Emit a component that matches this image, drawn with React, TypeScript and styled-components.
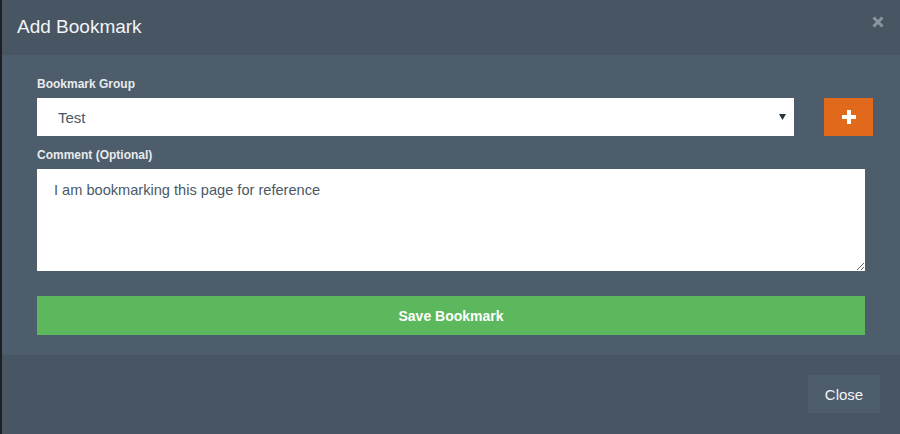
import { createGlobalStyle } from "styled-components";
import styled from "styled-components";

const GlobalStyle = createGlobalStyle`
  html, body {
    margin: 0;
    padding: 0;
    background: #1c1f23;
  }
  body {
    font-family: "Liberation Sans", Arial, sans-serif;
  }
`;

const Page = styled.div`
  height: 434px;
  padding-left: 2px;
  box-sizing: border-box;
  background: #1c1f23;
`;

const Modal = styled.div`
  display: flex;
  flex-direction: column;
  height: 100%;
  background: #485563;
`;

const Header = styled.div`
  display: flex;
  align-items: flex-start;
  justify-content: space-between;
  height: 55px;
  box-sizing: border-box;
  padding: 14px 16px 0 15px;
`;

const Title = styled.h4`
  margin: 0;
  font-size: 19px;
  font-weight: normal;
  line-height: 26px;
  color: #f2f4f5;
`;

const CloseX = styled.button`
  border: none;
  background: none;
  padding: 0;
  margin-top: 2px;
  width: 12px;
  height: 12px;
  cursor: pointer;
  display: flex;
`;

const Body = styled.div`
  background: #4d5d6c;
  padding: 20px 35px 20px 35px;
  display: flex;
  flex-direction: column;
`;

const Label = styled.label`
  display: block;
  font-size: 12px;
  font-weight: bold;
  color: #e8ebee;
  line-height: 18px;
  margin-bottom: 5px;
`;

const GroupRow = styled.div`
  display: flex;
  gap: 30px;
  margin-right: -8px;
  margin-bottom: 10px;
`;

const SelectWrap = styled.div`
  position: relative;
  flex: 1;
`;

const Select = styled.select`
  appearance: none;
  width: 100%;
  height: 38px;
  border: none;
  border-radius: 0;
  background: #fff;
  padding: 0 0 0 21px;
  font-family: "Liberation Sans", Arial, sans-serif;
  font-size: 15px;
  color: #4a5968;
  outline: none;
`;

const Caret = styled.svg`
  position: absolute;
  right: 8px;
  top: 16px;
  pointer-events: none;
`;

const AddButton = styled.button`
  width: 49px;
  height: 38px;
  border: none;
  background: #e0691c;
  display: flex;
  align-items: center;
  justify-content: center;
  padding: 0;
  cursor: pointer;
`;

const Comment = styled.textarea`
  display: block;
  box-sizing: border-box;
  width: 100%;
  height: 102px;
  border: none;
  border-radius: 0;
  padding: 11px 17px 8px;
  font-family: "Liberation Sans", Arial, sans-serif;
  font-size: 14.6px;
  line-height: 20px;
  color: #4a5968;
  margin: 0 0 25px;
  outline: none;
`;

const SaveButton = styled.button`
  height: 39px;
  width: 100%;
  border: none;
  background: #5cb85c;
  color: #fff;
  font-family: "Liberation Sans", Arial, sans-serif;
  font-size: 14px;
  font-weight: bold;
  cursor: pointer;
`;

const Footer = styled.div`
  flex: 1;
  display: flex;
  justify-content: flex-end;
  align-items: flex-start;
  padding: 20px 20px 0 0;
`;

const FooterButton = styled.button`
  width: 72px;
  height: 38px;
  border: none;
  background: #4d5d6c;
  color: #f2f4f5;
  font-family: "Liberation Sans", Arial, sans-serif;
  font-size: 15px;
  cursor: pointer;
`;

export default function App() {
  return (
    <>
      <GlobalStyle />
      <Page>
        <Modal>
          <Header>
            <Title>Add Bookmark</Title>
            <CloseX aria-label="Close">
              <svg width="12" height="12" viewBox="0 0 12 12">
                <path d="M1.5 1.5 L10.5 10.5 M10.5 1.5 L1.5 10.5" stroke="#8b959f" strokeWidth="3" />
              </svg>
            </CloseX>
          </Header>
          <Body>
            <Label>Bookmark Group</Label>
            <GroupRow>
              <SelectWrap>
                <Select defaultValue="test">
                  <option value="test">Test</option>
                </Select>
                <Caret width="7" height="6" viewBox="0 0 7 6">
                  <path d="M0 0 H7 L3.5 6 Z" fill="#2b3540" />
                </Caret>
              </SelectWrap>
              <AddButton aria-label="Add group">
                <svg width="14" height="14" viewBox="0 0 14 14">
                  <path d="M5 0 H9 V5 H14 V9 H9 V14 H5 V9 H0 V5 H5 Z" fill="#fff" />
                </svg>
              </AddButton>
            </GroupRow>
            <Label>Comment (Optional)</Label>
            <Comment defaultValue="I am bookmarking this page for reference" />
            <SaveButton>Save Bookmark</SaveButton>
          </Body>
          <Footer>
            <FooterButton>Close</FooterButton>
          </Footer>
        </Modal>
      </Page>
    </>
  );
}
